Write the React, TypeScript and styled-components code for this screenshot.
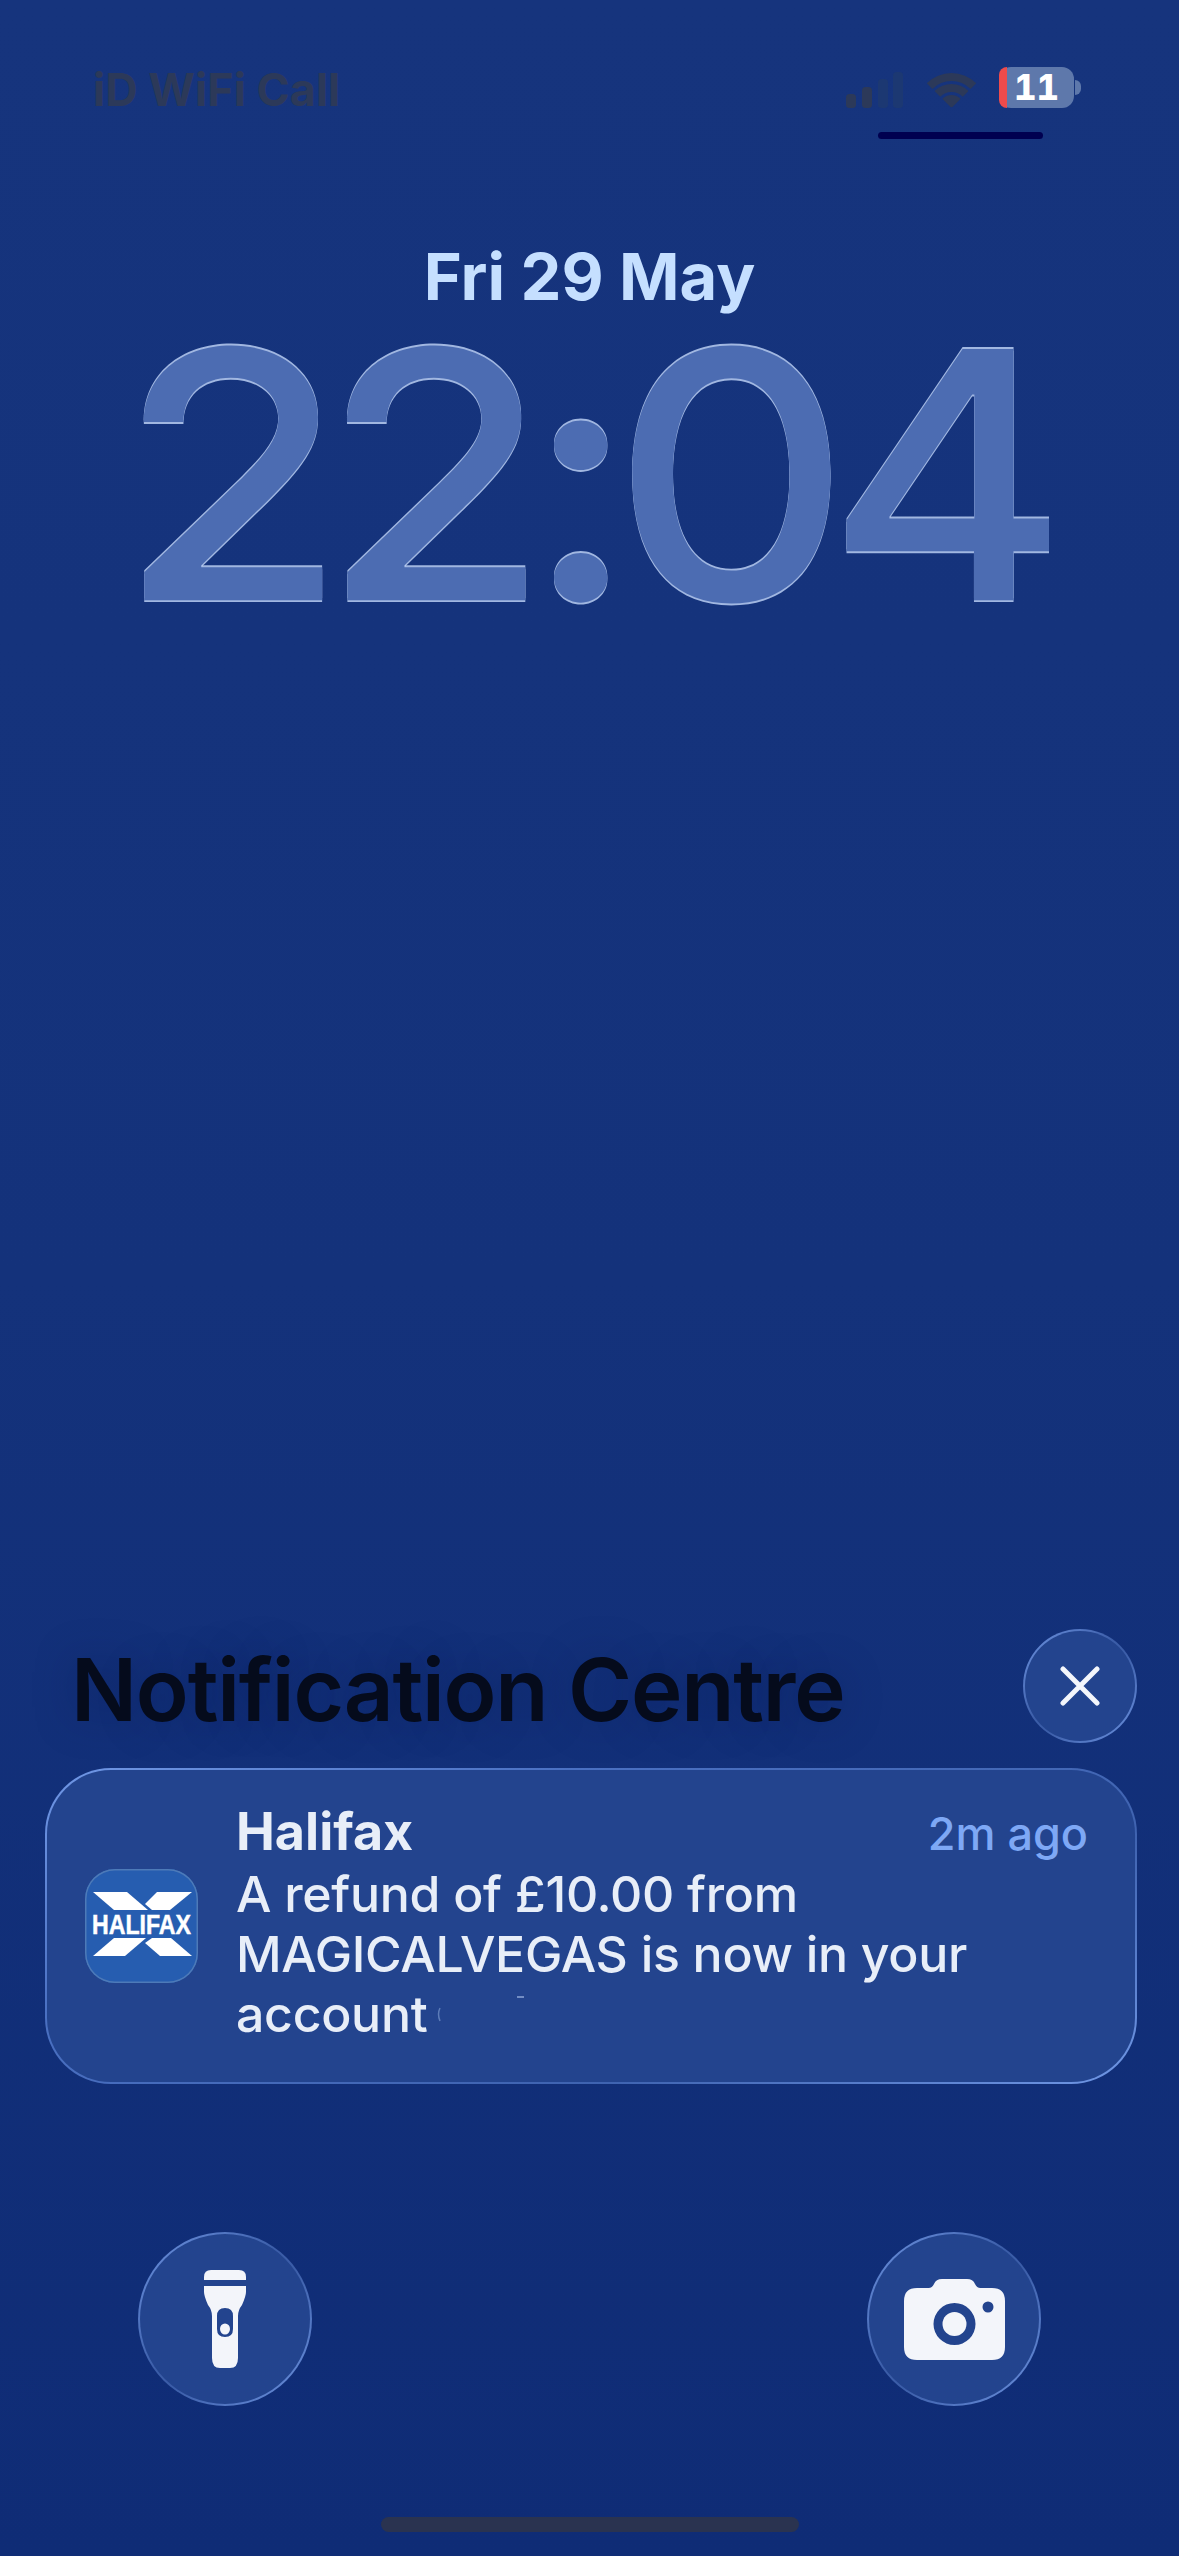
import React from "react";
import styled, { createGlobalStyle } from "styled-components";

const GlobalStyle = createGlobalStyle`
  html, body {
    margin: 0;
    padding: 0;
    background: #112d76;
  }
`;

function SignalIcon() {
  const bars = [
    { x: 0, h: 14, on: true },
    { x: 16, h: 21, on: true },
    { x: 32, h: 29, on: false },
    { x: 47, h: 36, on: false },
  ];
  return (
    <svg width="57" height="36" viewBox="0 0 57 36">
      {bars.map(b => (
        <rect key={b.x} x={b.x} y={36 - b.h} width="10" height={b.h} rx="3.5" fill={b.on ? "#2c3959" : "#1c3872"} />
      ))}
    </svg>
  );
}

// wedge between two radii, 45deg either side of straight up
function wifiBand(outer: number, inner: number) {
  const s = Math.SQRT1_2;
  const cx = 24.5;
  const cy = 37;
  return `M${cx - outer * s} ${cy - outer * s} A${outer} ${outer} 0 0 1 ${cx + outer * s} ${cy - outer * s} L${cx + inner * s} ${cy - inner * s} A${inner} ${inner} 0 0 0 ${cx - inner * s} ${cy - inner * s} Z`;
}

function WifiIcon() {
  return (
    <svg width="49" height="37" viewBox="0 0 49 37">
      <path d={wifiBand(35, 27)} fill="#2c3959" />
      <path d={wifiBand(24, 16)} fill="#2c3959" />
      <path d={wifiBand(13, 1)} fill="#2c3959" />
    </svg>
  );
}

function HalifaxLogo() {
  return (
    <svg width="113" height="114" viewBox="0 0 113 114">
      <polygon points="8,23 42,23 63,41 29,41" fill="#fff" />
      <polygon points="72,23 107,23 85,41 67,41 60,35" fill="#fff" />
      <polygon points="29,69 61,69 40,87 8,87" fill="#fff" />
      <polygon points="60,74 67,69 86,69 107,87 75,87" fill="#fff" />
      <LogoText x="56.5" y="65" textAnchor="middle" textLength="99" lengthAdjust="spacingAndGlyphs">HALIFAX</LogoText>
    </svg>
  );
}

function TorchIcon() {
  return (
    <svg width="42" height="98" viewBox="0 0 42 98">
      <path d="M0 10 V7 Q0 0 7 0 H35 Q42 0 42 7 V10 Z" fill="#f3f5fa" />
      <path fillRule="evenodd" d="M0 16 H42 V22 Q42 26 38 35 Q34 40 34 46 V88 Q34 98 26 98 H16 Q8 98 8 88 V46 Q8 40 4 35 Q0 26 0 22 Z M13 46 V59 Q13 67 21 67 Q29 67 29 59 V46 Q29 38 21 38 Q13 38 13 46 Z" fill="#f3f5fa" />
      <ellipse cx="21" cy="59" rx="5" ry="5.5" fill="#f3f5fa" />
    </svg>
  );
}

function CameraIcon() {
  return (
    <svg width="101" height="81" viewBox="0 0 101 81">
      <path
        fillRule="evenodd"
        fill="#f3f5fa"
        d="M13 9 H25 Q28 9 30 5 Q32 0 38 0 H63 Q69 0 71 5 Q73 9 76 9 H88 Q101 9 101 22 V68 Q101 81 88 81 H13 Q0 81 0 68 V22 Q0 9 13 9 Z M50.5 24 A21 21 0 1 0 50.5 66 A21 21 0 1 0 50.5 24 Z M84 22.5 A5.5 5.5 0 1 0 84 33.5 A5.5 5.5 0 1 0 84 22.5 Z"
      />
      <circle cx="50.5" cy="45" r="12" fill="#f3f5fa" />
    </svg>
  );
}

export default function App() {
  return (
    <Page>
      <GlobalStyle />
      <StatusBar>
        <Carrier>iD WiFi Call</Carrier>
        <StatusRight>
          <StatusIcons>
            <SignalIcon />
            <WifiIcon />
            <Battery>
              <BatteryLow />
              <BatteryLevel>11</BatteryLevel>
              <BatteryCap />
            </Battery>
          </StatusIcons>
          <StatusUnderline />
        </StatusRight>
      </StatusBar>

      <Clock>
        <DateLine>Fri 29 May</DateLine>
        <Time>22:04</Time>
      </Clock>

      <NotificationHeader>
        <HeaderTitle>Notification Centre</HeaderTitle>
        <CloseButton aria-label="Close">
          <svg width="40" height="40" viewBox="0 0 40 40">
            <path d="M3 3 L37 37 M37 3 L3 37" stroke="#f3f6fc" strokeWidth="5" strokeLinecap="round" />
          </svg>
        </CloseButton>
      </NotificationHeader>

      <NotificationCard>
        <AppIcon><HalifaxLogo /></AppIcon>
        <CardBody>
          <CardTop>
            <AppName>Halifax</AppName>
            <Ago>2m ago</Ago>
          </CardTop>
          <Message>A refund of £10.00 from</Message>
          <Message>MAGICALVEGAS is now in your</Message>
          <Message>
            account
            <Smudge width="90" height="40" viewBox="0 0 90 40">
              <path d="M5 14 Q2 20 5 27" fill="none" stroke="#5d7cb8" strokeWidth="1.5" />
              <path d="M82 3 H89" stroke="#8ea6d6" strokeWidth="1.5" />
            </Smudge>
          </Message>
        </CardBody>
      </NotificationCard>

      <QuickActions>
        <RoundButton aria-label="Torch"><TorchIcon /></RoundButton>
        <RoundButton aria-label="Camera"><CameraIcon /></RoundButton>
      </QuickActions>

      <HomeBar />
    </Page>
  );
}

const Page = styled.div`
  width: 1179px;
  height: 2556px;
  overflow: hidden;
  display: flex;
  flex-direction: column;
  font-family: Inter, "Liberation Sans", sans-serif;
  background: linear-gradient(180deg, #16347d 0%, #14327b 50%, #0f2c76 100%);
`;

const StatusBar = styled.div`
  display: flex;
  justify-content: space-between;
  align-items: flex-start;
  padding: 67px 98px 0 93px;
`;

const Carrier = styled.div`
  font-size: 45px;
  font-weight: 700;
  line-height: 46px;
  color: #2c3959;
`;

const StatusRight = styled.div`
  display: flex;
  flex-direction: column;
  width: 235px;
`;

const StatusIcons = styled.div`
  display: flex;
  align-items: flex-end;
  height: 41px;
  gap: 24px;
`;

const Battery = styled.div`
  position: relative;
  width: 75px;
  height: 41px;
  margin-left: -1px;
  border-radius: 12px;
  overflow: visible;
  background: #5e78ab;
  display: flex;
  align-items: center;
  justify-content: center;
`;

const BatteryLow = styled.span`
  position: absolute;
  left: 0;
  top: 0;
  bottom: 0;
  width: 8px;
  border-radius: 12px 0 0 12px;
  background: #ee4b4b;
`;

const BatteryLevel = styled.span`
  font-size: 35px;
  font-weight: 800;
  line-height: 41px;
  color: #fff;
  font-feature-settings: "tnum";
`;

const BatteryCap = styled.span`
  position: absolute;
  right: -7px;
  top: 13px;
  width: 6px;
  height: 15px;
  border-radius: 0 8px 8px 0;
  background: #5e78ab;
`;

const StatusUnderline = styled.div`
  width: 165px;
  height: 7px;
  margin: 24px 0 0 32px;
  border-radius: 4px;
  background: #000050;
`;

const Clock = styled.div`
  display: flex;
  flex-direction: column;
  align-items: center;
  margin-top: 100px;
`;

const DateLine = styled.div`
  font-size: 65px;
  font-weight: 700;
  line-height: 76px;
  color: #c5dfff;
`;

const Time = styled.div`
  font-size: 356px;
  font-weight: 550;
  line-height: 320px;
  letter-spacing: -24px;
  margin-right: 16px;
  color: #4c6cb2;
  transform: scale(1.04, 0.97);
  text-shadow: 0 -2px 0 rgba(196, 216, 250, 0.8), 0 2px 0 rgba(196, 216, 250, 0.8);
`;

const NotificationHeader = styled.div`
  display: flex;
  justify-content: space-between;
  align-items: center;
  margin-top: auto;
  padding: 0 42px 3px 71px;
`;

const HeaderTitle = styled.h1`
  margin: 3px 0 0;
  font-size: 87px;
  font-weight: 600;
  line-height: 105px;
  letter-spacing: -1.2px;
  color: #050b1c;
  text-shadow: 0 0 40px rgba(8, 24, 80, 0.35);
`;

const GlassCircle = styled.button`
  display: flex;
  align-items: center;
  justify-content: center;
  padding: 0;
  border-radius: 50%;
  border: 2px solid transparent;
  box-sizing: border-box;
  background: linear-gradient(#23448e, #23448e) padding-box,
    linear-gradient(135deg, #6f95e2 0%, #3b5da8 45%, #3b5da8 55%, #6f95e2 100%) border-box;
`;

const CloseButton = styled(GlassCircle)`
  width: 114px;
  height: 114px;
  margin-bottom: 3px;
`;

const NotificationCard = styled.div`
  display: flex;
  align-items: center;
  box-sizing: border-box;
  width: 1092px;
  height: 316px;
  margin: 19px 0 0 45px;
  padding: 0 47px 6px 38px;
  gap: 38px;
  border-radius: 66px;
  border: 2px solid transparent;
  background: linear-gradient(#23448e, #23448e) padding-box,
    linear-gradient(155deg, #7198e6 0%, #4a70c2 30%, #3f63b0 70%, #7198e6 100%) border-box;
`;

const AppIcon = styled.div`
  flex: none;
  width: 113px;
  height: 114px;
  margin-top: 6px;
  border-radius: 30px;
  background: #265db0;
  box-shadow: inset 0 0 0 1.5px #4d7ab8;
`;

const LogoText = styled.text`
  font-family: "Liberation Sans", Arial, sans-serif;
  font-size: 28px;
  font-weight: 700;
  fill: #fff;
  stroke: #fff;
  stroke-width: 0.5px;
`;

const CardBody = styled.div`
  flex: 1;
  min-width: 0;
  display: flex;
  flex-direction: column;
`;

const CardTop = styled.div`
  display: flex;
  justify-content: space-between;
  align-items: baseline;
`;

const AppName = styled.div`
  font-size: 52px;
  font-weight: 700;
  line-height: 60px;
  color: #e8eef8;
`;

const Ago = styled.div`
  font-size: 45px;
  font-weight: 500;
  line-height: 60px;
  color: #7ea8f5;
`;

const Message = styled.div`
  display: flex;
  align-items: center;
  font-size: 50px;
  font-weight: 500;
  line-height: 60px;
  letter-spacing: -0.3px;
  color: #e8eef8;
  white-space: nowrap;
`;

const Smudge = styled.svg`
  margin-left: 8px;
`;

const QuickActions = styled.div`
  display: flex;
  justify-content: space-between;
  padding: 148px 138px 0 138px;
`;

const RoundButton = styled(GlassCircle)`
  width: 174px;
  height: 174px;
`;

const HomeBar = styled.div`
  align-self: center;
  flex: none;
  width: 418px;
  height: 15px;
  margin: 111px 0 24px;
  border-radius: 8px;
  background: #2a3350;
`;
